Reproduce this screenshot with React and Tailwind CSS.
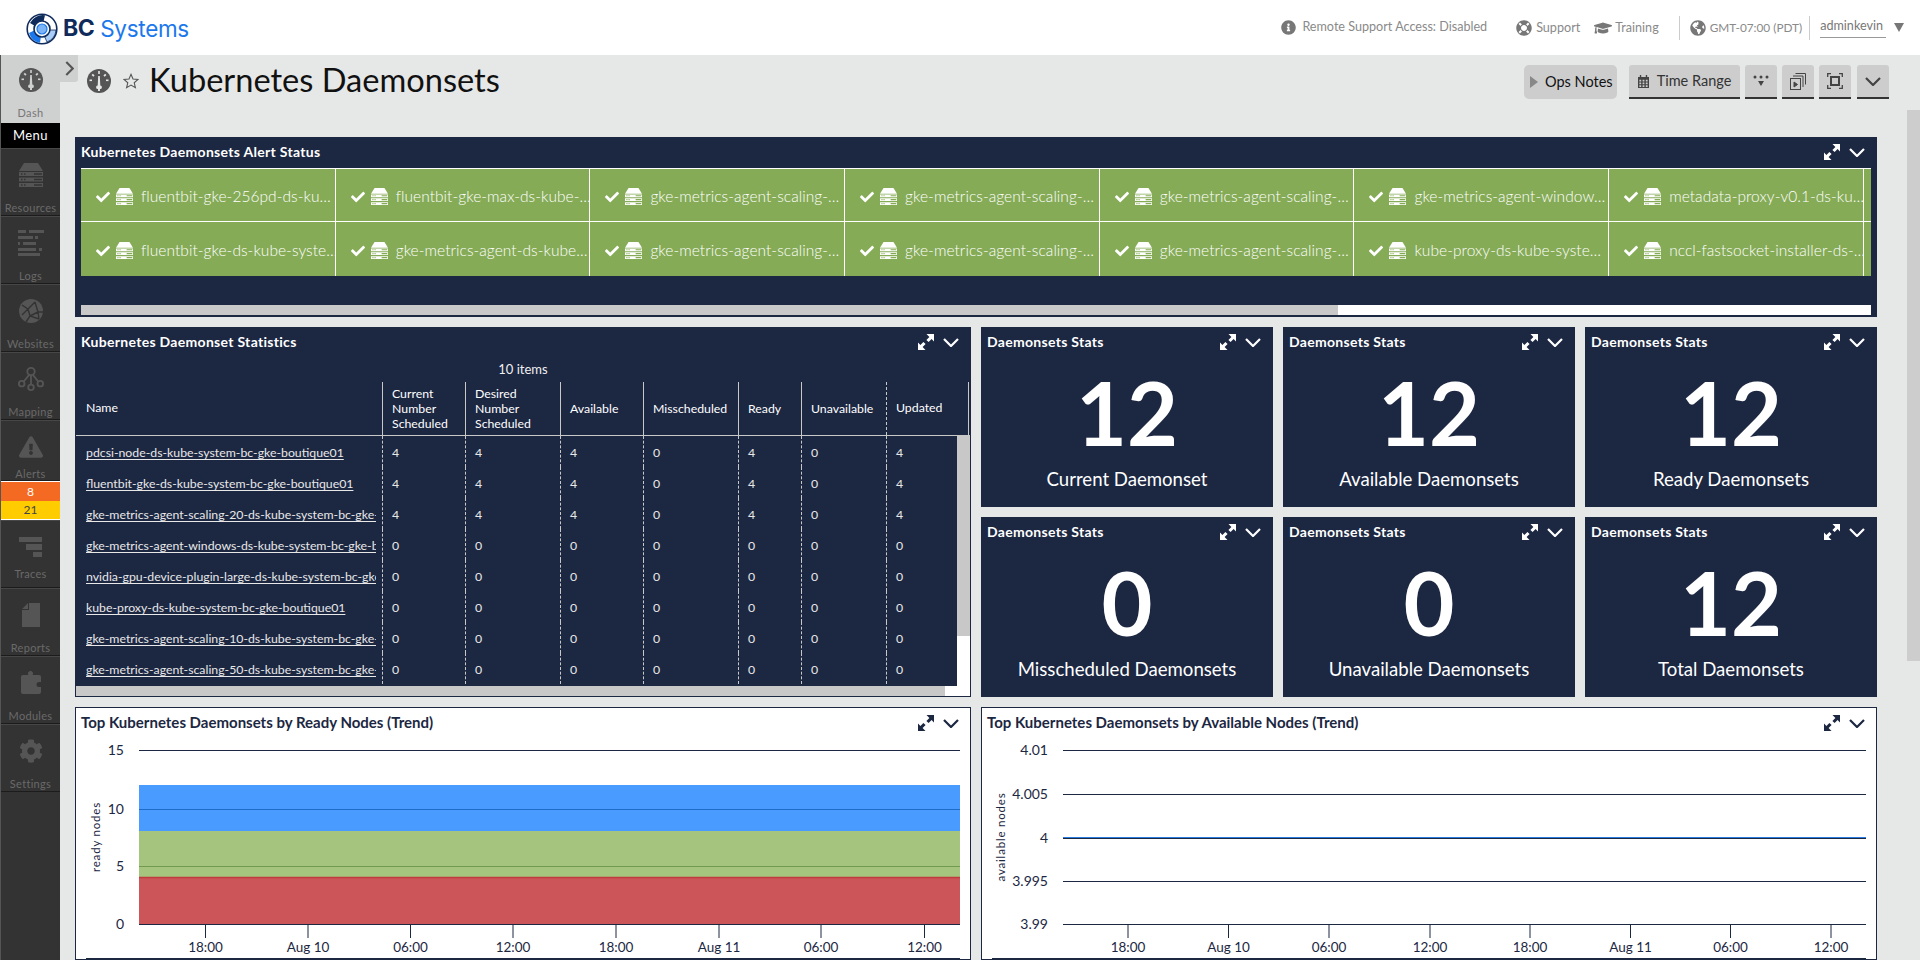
import React from "react";
import { FaCheck, FaCog, FaExclamationTriangle, FaGlobeAmericas, FaGraduationCap, FaInfoCircle, FaLifeRing } from "react-icons/fa";

const NAVY = "#1c2742";

function Gauge({ hole = "#cfd0d0", className = "w-6 h-6" }) {
  return (
    <svg viewBox="0 0 24 24" className={className}>
      <circle cx="12" cy="12" r="12" fill="#555555" />
      <g fill={hole}>
        <rect x="11.2" y="2" width="1.6" height="3" />
        <rect x="5" y="5" width="1.8" height="2.4" transform="rotate(-45 6 6)" />
        <rect x="17.2" y="5" width="1.8" height="2.4" transform="rotate(45 18 6)" />
        <rect x="2.5" y="10.5" width="2.5" height="1.6" />
        <rect x="19" y="10.5" width="2.5" height="1.6" />
        <path d="M11.2 7h1.6l.5 9.5a1.4 1.4 0 0 1-.3 3.5v2h-2v-2a1.4 1.4 0 0 1-.3-3.5z" />
      </g>
    </svg>
  );
}

function Server({ className = "w-6 h-6" }) {
  return (
    <svg viewBox="0 0 24 24" className={className} fill="currentColor" fillRule="evenodd">
      <path d="M5 0h14l5 8H0z" />
      <path d="M0 9h24v4H0zM2 10.2v1.6h1.5v-1.6zM5 10.2v1.6h1.5v-1.6zM15 10.2v1.6h8v-1.6z" />
      <path d="M0 14.5h24v4H0zM2 15.7v1.6h1.5v-1.6zM5 15.7v1.6h1.5v-1.6zM15 15.7v1.6h8v-1.6z" />
      <path d="M0 20h24v4H0zM2 21.2v1.6h1.5v-1.6zM5 21.2v1.6h1.5v-1.6zM15 21.2v1.6h8v-1.6z" />
    </svg>
  );
}

function Logs() {
  return (
    <svg viewBox="0 0 26 26" className="w-[26px] h-[26px]" fill="#555555">
      <path d="M0 0h8v3H0zM11 0h15v3H11zM0 6h15v3H0zM17 6h3v3h-3zM0 12h2v3H0zM5 12h13v3H5zM0 18h18v3H0zM21 18h3v3h-3zM0 23h22v3H0z" />
    </svg>
  );
}

function WebGlobe() {
  return (
    <svg viewBox="0 0 24 24" className="w-6 h-6">
      <circle cx="12" cy="12" r="12" fill="#555555" />
      <path d="M3 6l6 4 7-7M9 10l-6 6M9 10l2 7 9 3M11 17l-4 6M16 3l3 10 5 0M19 13l1 7M11 17l8-4" stroke="#333333" strokeWidth="1.4" fill="none" />
    </svg>
  );
}

function MapIcon() {
  return (
    <svg viewBox="0 0 28 26" className="w-[26px] h-[26px]" fill="none" stroke="#555555" strokeWidth="2">
      <circle cx="14" cy="5" r="4" />
      <circle cx="4" cy="18" r="3" />
      <circle cx="14" cy="22" r="3" />
      <circle cx="24" cy="18" r="3" />
      <path d="M14 9v10M12 8.500l-6 7.500M16 8.500l6 7.500" />
    </svg>
  );
}

function Traces() {
  return (
    <svg viewBox="0 0 23 20" className="w-[23px] h-5" fill="#555555">
      <path d="M0 0h23v5H0zM7 7h16v6H7zM14 15h9v5h-9z" />
    </svg>
  );
}

function Report() {
  return (
    <svg viewBox="0 0 18 24" className="w-[18px] h-6" fill="#555555">
      <path d="M0 6L6 0v6zM7 0h11v24H0V7h7z" />
    </svg>
  );
}

function Puzzle() {
  return (
    <svg viewBox="0 0 20 24" className="w-5 h-6" fill="#555555">
      <path d="M2 4h5.500a2.500 2.500 0 1 1 4 0H18a2 2 0 0 1 2 2v5h-2a2.500 2.500 0 0 0 0 5h2v5a2 2 0 0 1-2 2H2a2 2 0 0 1-2-2V6a2 2 0 0 1 2-2z" />
    </svg>
  );
}

function Logo() {
  return (
    <svg viewBox="0 0 32 32" className="w-8 h-8 mt-[2px]">
      <circle cx="16" cy="16" r="14.8" fill="#ffffff" stroke="#0f2b5b" strokeWidth="1.6" />
      <path d="M3 20A14 14 0 0 0 14 29.800L15 23A8 8 0 0 1 9 17z" fill="#1b78ec" />
      <path d="M4 10A14 14 0 0 1 19 2.300L17.500 8.500A8 8 0 0 0 9 13z" fill="#0f2b5b" />
      <path d="M30 17A14 14 0 0 1 21 29L18.500 23.500A8 8 0 0 0 23.500 17z" fill="#a8cdf7" stroke="#0f2b5b" strokeWidth="0.8" />
      <circle cx="16" cy="16" r="8" fill="#ffffff" stroke="#0f2b5b" strokeWidth="1.600" />
      <circle cx="16" cy="16" r="5" fill="#7db4f5" stroke="#1b78ec" strokeWidth="1.200" />
    </svg>
  );
}

function Expand({ color = "#ffffff" }) {
  return (
    <svg viewBox="0 0 16 16" className="w-[16px] h-[16px]" fill={color}>
      <path d="M8.500 0H16v7.500l-2.400-2.400-3 3-2.200-2.200 3-3zM7.500 16H0V8.500l2.400 2.400 3-3 2.200 2.200-3 3z" />
    </svg>
  );
}

function Chev({ color = "#ffffff", className = "w-4 h-[9px]", width = 2.2 }) {
  return (
    <svg viewBox="0 0 16 9" className={className} fill="none" stroke={color} strokeWidth={width}>
      <path d="M1 1l7 7 7-7" />
    </svg>
  );
}

function PanelHead({ title, dark }) {
  const c = dark ? NAVY : "#ffffff";
  return (
    <div className="flex items-center h-[30px] pl-[6px] pr-[12px] shrink-0">
      <span className={`flex-1 -mt-[2px] font-bold whitespace-nowrap ${dark ? "text-[15px] text-[#1c2742]" : "text-[14px] tracking-[0.3px] text-white"}`}>{title}</span>
      <span className="mr-[9px] flex"><Expand color={c} /></span>
      <Chev color={c} />
    </div>
  );
}

function SideItem({ icon, label, tight, h = "h-[68px]" }) {
  return (
    <div className={`${h} border-t border-t-[#474747] border-b border-b-[#1c1c1c] flex flex-col items-center shrink-0 pt-[14px]`}>
      <div className="h-6 w-full flex items-center justify-center text-[#555555]">{icon}</div>
      <div className={`${tight ? "mt-[8px]" : "mt-[14px]"} text-[11px] leading-[14px] text-[#6a6a6a] tracking-[0.3px]`}>{label}</div>
    </div>
  );
}

function Sidebar() {
  return (
    <aside className="w-[60px] shrink-0 bg-[#333333] flex flex-col border-l border-l-[#555555]">
      <div className="h-[68px] bg-[#cfd0d0] flex flex-col items-center pt-[13px] shrink-0">
        <Gauge />
        <div className="mt-[14px] text-[11px] leading-[14px] text-[#777777] tracking-[0.3px]">Dash</div>
      </div>
      <div className="h-[25px] bg-black text-white text-[13px] leading-[24px] text-center shrink-0 tracking-[0.4px]">Menu</div>
      <SideItem icon={<Server />} label="Resources" />
      <SideItem icon={<Logs />} label="Logs" />
      <SideItem icon={<WebGlobe />} label="Websites" />
      <SideItem icon={<MapIcon />} label="Mapping" />
      <SideItem icon={<FaExclamationTriangle className="w-6 h-6" />} label="Alerts" tight h="h-[61px]" />
      <div className="border-t border-b border-white shrink-0">
        <div className="h-[19px] bg-[#f56a22] text-white text-[12px] leading-[19px] text-center">8</div>
        <div className="h-[18px] bg-[#ffcc00] text-[#444444] text-[12px] leading-[18px] text-center">21</div>
      </div>
      <SideItem icon={<Traces />} label="Traces" tight />
      <SideItem icon={<Report />} label="Reports" />
      <SideItem icon={<Puzzle />} label="Modules" />
      <SideItem icon={<FaCog className="w-6 h-6" />} label="Settings" />
    </aside>
  );
}

function Header() {
  return (
    <header className="h-[55px] bg-white flex items-center shrink-0 pl-[26px] pr-[16px]">
      <Logo />
      <span className="ml-[5px] mt-[2px] [font-family:Inter,sans-serif] text-[23px] font-bold text-[#0f2b5b] tracking-[-0.5px]">BC</span>
      <span className="ml-[6px] mt-[2px] [font-family:Inter,sans-serif] text-[22.500px] text-[#1b78ec] tracking-[-0.3px]">Systems</span>
      <div className="flex-1" />
      <div className="flex items-center text-[12.600px] text-[#8a8a8a]">
        <FaInfoCircle className="w-[15px] h-[15px] text-[#777777] mr-[6px]" />
        <span className="mr-[29px]">Remote Support Access: Disabled</span>
        <FaLifeRing className="w-4 h-4 text-[#777777] mr-[4px]" />
        <span className="mr-[14px] mt-[2px]">Support</span>
        <FaGraduationCap className="w-[18px] h-[18px] text-[#777777] mr-[3px]" />
        <span className="mt-[2px]">Training</span>
        <span className="w-px h-[24px] bg-[#cccccc] ml-[20px] mr-[10px]" />
        <FaGlobeAmericas className="w-4 h-4 text-[#777777] mr-[4px]" />
        <span className="mt-[1px] text-[11.800px]">GMT-07:00 (PDT)</span>
        <span className="w-px h-[24px] bg-[#cccccc] ml-[7px] mr-[10px]" />
        <span className="border-b border-[#999999] text-[#777777] pr-[3px] pb-[2px]">adminkevin</span>
        <span className="ml-[8px] w-0 h-0 border-l-[5px] border-r-[5px] border-t-[9px] border-l-transparent border-r-transparent border-t-[#777777]" />
      </div>
    </header>
  );
}

function ToolBtn({ children, className = "w-[32px]" }) {
  return (
    <div className={`${className} h-[34px] bg-[#cdcdcd] rounded-t-[3px] border-b-2 border-b-[#333333] flex items-center justify-center text-[#444444]`}>{children}</div>
  );
}

function Toolbar() {
  return (
    <div className="h-[82px] flex items-start pl-[27px] pr-[31px] shrink-0">
      <div className="flex items-center h-[52px]">
        <Gauge hole="#e6e7e7" />
        <svg viewBox="0 0 24 24" className="w-4 h-4 ml-[12px]" fill="none" stroke="#555555" strokeWidth="1.600">
          <path d="M12 2l3 7 7.500.6-5.700 5 1.800 7.400L12 18l-6.600 4 1.800-7.400-5.700-5L9 9z" />
        </svg>
        <h1 className="ml-[10px] -mt-[2px] text-[32.600px] leading-none text-[#111111] font-normal whitespace-nowrap">Kubernetes Daemonsets</h1>
      </div>
      <div className="flex-1" />
      <div className="flex items-start pt-[10px]">
        <div className="w-[93px] h-[34px] bg-[#cdcdcd] rounded-[5px] flex items-center pl-[6px] text-[14.500px] text-[#111111] mr-[12px]">
          <span className="w-0 h-0 border-t-[6px] border-b-[6px] border-l-[8px] border-t-transparent border-b-transparent border-l-[#888888] mr-[7px]" />
          Ops Notes
        </div>
        <ToolBtn className="w-[111px] mr-[5px]">
          <svg viewBox="0 0 12 14" className="w-[11px] h-[13px] mr-[8px]" fill="#444444">
            <path d="M2 0h1.500v2H8.500V0H10v2h2v12H0V2h2zM1.500 5v2h2V5zM5 5v2h2V5zM8.500 5v2h2V5zM1.500 8v2h2V8zM5 8v2h2V8zM8.500 8v2h2V8zM1.500 11v2h2v-2zM5 11v2h2v-2zM8.500 11v2h2v-2z" fillRule="evenodd" />
          </svg>
          <span className="text-[14.500px] text-[#333333]">Time Range</span>
        </ToolBtn>
        <ToolBtn className="w-[32px] mr-[5px]">
          <svg viewBox="0 0 16 12" className="w-[16px] h-[12px]" fill="#444444">
            <circle cx="2" cy="2" r="1.500" /><circle cx="8" cy="2" r="1.500" /><circle cx="14" cy="2" r="1.500" />
            <path d="M5 6h6l-3 5z" />
          </svg>
        </ToolBtn>
        <ToolBtn className="w-[32px] mr-[5px]">
          <svg viewBox="0 0 16 17" className="w-[16px] h-[17px]" fill="none" stroke="#444444" strokeWidth="1">
            <path d="M5.500.5h10v11M3 3h10v11" />
            <rect x="0.500" y="5.500" width="10" height="11" fill="#cdcdcd" />
            <path d="M4 9l3.500 2.500L4 14z" fill="#444444" />
          </svg>
        </ToolBtn>
        <ToolBtn className="w-[32px] mr-[6px]">
          <svg viewBox="0 0 16 16" className="w-[16px] h-[16px]" fill="none" stroke="#444444" strokeWidth="1.300">
            <path d="M.7 4V.7H4M12 .7h3.300V4M15.300 12v3.300H12M4 15.300H.7V12" />
            <rect x="4" y="4" width="8" height="8" strokeWidth="2" />
          </svg>
        </ToolBtn>
        <ToolBtn className="w-[32px]"><Chev color="#444444" className="w-[16px] h-[9px]" /></ToolBtn>
      </div>
    </div>
  );
}

const row1 = ["fluentbit-gke-256pd-ds-ku…", "fluentbit-gke-max-ds-kube-…", "gke-metrics-agent-scaling-…", "gke-metrics-agent-scaling-…", "gke-metrics-agent-scaling-…", "gke-metrics-agent-window…", "metadata-proxy-v0.1-ds-ku…", ""];
const row2 = ["fluentbit-gke-ds-kube-syste…", "gke-metrics-agent-ds-kube…", "gke-metrics-agent-scaling-…", "gke-metrics-agent-scaling-…", "gke-metrics-agent-scaling-…", "kube-proxy-ds-kube-syste…", "nccl-fastsocket-installer-ds-…", ""];

function AlertRow({ items, rowClass }) {
  return (
    <div className={`flex h-[54px] ${rowClass}`}>
      {items.map((t, i) => (
        <div key={i} className="w-[254.700px] shrink-0 h-full bg-[#85ab56] border-r border-white flex items-center pl-[14px] pt-[3px] text-white">
          {t && (
            <>
              <FaCheck className="w-4 h-[14px] shrink-0" />
              <span className="ml-[5px] flex"><Server className="w-[17px] h-[17px]" /></span>
              <span className="ml-[8px] text-[15.500px] font-light tracking-[0.05px] whitespace-nowrap">{t}</span>
            </>
          )}
        </div>
      ))}
    </div>
  );
}

function AlertPanel() {
  return (
    <section className="h-[180px] bg-[#1c2742] flex flex-col shrink-0">
      <PanelHead title="Kubernetes Daemonsets Alert Status" />
      <div className="mx-[6px] mt-[1px] overflow-hidden">
        <AlertRow items={row1} rowClass="border-t border-b border-white" />
        <AlertRow items={row2} rowClass="" />
      </div>
      <div className="mx-[6px] mt-[29px] h-[10px] bg-white">
        <div className="w-[1257px] h-full bg-[#c8c8c8]" />
      </div>
    </section>
  );
}

const headers = [
  ["Current", "Number", "Scheduled"],
  ["Desired", "Number", "Scheduled"],
  ["Available"],
  ["Misscheduled"],
  ["Ready"],
  ["Unavailable"],
];

const rows = [
  ["pdcsi-node-ds-kube-system-bc-gke-boutique01", 4],
  ["fluentbit-gke-ds-kube-system-bc-gke-boutique01", 4],
  ["gke-metrics-agent-scaling-20-ds-kube-system-bc-gke-boutique01", 4],
  ["gke-metrics-agent-windows-ds-kube-system-bc-gke-boutique01", 0],
  ["nvidia-gpu-device-plugin-large-ds-kube-system-bc-gke-boutique01", 0],
  ["kube-proxy-ds-kube-system-bc-gke-boutique01", 0],
  ["gke-metrics-agent-scaling-10-ds-kube-system-bc-gke-boutique01", 0],
  ["gke-metrics-agent-scaling-50-ds-kube-system-bc-gke-boutique01", 0],
];

function StatsTable() {
  return (
    <section className="h-[370px] border border-[#1c2742] bg-white flex flex-col text-[12.300px] text-[#e8e8e8]">
      <div className="bg-[#1c2742] h-[28px]">
        <div className="-ml-px -mr-px -mt-px"><PanelHead title="Kubernetes Daemonset Statistics" /></div>
      </div>
      <div className="bg-[#1c2742] h-[26px] leading-[26px] text-center text-[13px] text-[#f0f0f0]">10 items</div>
      <div className="bg-[#1c2742] h-[54px] border-b border-[#c8c8c8] grid grid-cols-[306px_83px_95px_83px_95px_63px_85px_83px]">
        <div className="pl-[10px] flex items-center text-white">Name</div>
        {headers.map((h, i) => (
          <div key={i} className="pl-[9px] flex flex-col justify-center leading-[15px] text-white border-l border-[#c8c8c8]">
            {h.map((l) => <span key={l}>{l}</span>)}
          </div>
        ))}
        <div className="border-r border-[#c8c8c8]">
          <div className="h-full pl-[9px] flex items-center text-white border-l border-dashed border-[#c8c8c8]">Updated</div>
        </div>
      </div>
      <div className="flex h-[250px]">
        <div className="w-[881px] bg-[#1c2742] overflow-hidden">
          {rows.map(([name, v]) => (
            <div key={name} className="h-[31px] grid grid-cols-[306px_83px_95px_83px_95px_63px_85px_71px] items-stretch">
              <div className="pl-[10px] pr-[6px] pt-[2px] leading-[29px]">
                <div className="overflow-hidden whitespace-nowrap"><span className="underline underline-offset-2">{name}</span></div>
              </div>
              {[v, v, v, 0, v, 0, v].map((c, j) => (
                <div key={j} className="pl-[9px] pt-[2px] leading-[29px] border-l border-dashed border-[#c8c8c8]">{c}</div>
              ))}
            </div>
          ))}
        </div>
        <div className="w-[13px] bg-white">
          <div className="h-[200px] bg-[#c8c8c8]" />
        </div>
      </div>
      <div className="h-[10px] bg-white">
        <div className="w-[869px] h-full bg-[#c8c8c8]" />
      </div>
    </section>
  );
}

function StatCard({ value, label }) {
  return (
    <section className="h-[180px] bg-[#1c2742] text-white flex flex-col">
      <PanelHead title="Daemonsets Stats" />
      <div className="mt-[11px] h-[88px] text-[88px] leading-[88px] font-bold text-center">{value}</div>
      <div className="mt-[11px] h-6 text-[18.600px] leading-6 text-center">{label}</div>
    </section>
  );
}

const t18 = ["18:00", "Aug 10", "06:00", "12:00", "18:00", "Aug 11", "06:00", "12:00"];

function AreaChart() {
  const xs = [205.5, 308, 410.5, 513, 616, 719, 821, 924.5];
  const o = 76;
  const top = 738;
  const ys = [[750, "15"], [809, "10"], [866, "5"], [924, "0"]];
  return (
    <svg viewBox="0 0 894 222" className="w-[894px] h-[222px] block shrink-0">
      <rect x={139 - o} y={785 - top} width={821} height={46} fill="#4a9bff" />
      <rect x={139 - o} y={831 - top} width={821} height={46} fill="#a5c47e" />
      <rect x={139 - o} y={877 - top} width={821} height={47} fill="#cb5559" />
      <line x1={139 - o} x2={960 - o} y1={750.5 - top} y2={750.5 - top} stroke={NAVY} />
      <line x1={139 - o} x2={960 - o} y1={809.5 - top} y2={809.5 - top} stroke="#1f6bc9" />
      <line x1={139 - o} x2={960 - o} y1={866.5 - top} y2={866.5 - top} stroke="#6f9a50" />
      <line x1={139 - o} x2={960 - o} y1={877.5 - top} y2={877.5 - top} stroke="#c03a3e" strokeWidth="1.500" />
      <line x1={139 - o} x2={960 - o} y1={924.5 - top} y2={924.5 - top} stroke={NAVY} />
      {ys.map(([y, l]) => (
        <text key={l} x={124 - o} y={y + 5 - top} textAnchor="end" fontSize="14" fill={NAVY}>{l}</text>
      ))}
      <text transform={`translate(${100 - o} ${837 - top}) rotate(-90)`} textAnchor="middle" fontSize="11.500" letterSpacing="0.8" fill={NAVY}>ready nodes</text>
      {xs.map((x, i) => (
        <g key={i}>
          <line x1={x - o} x2={x - o} y1={924 - top} y2={938 - top} stroke={NAVY} />
          <text x={x - o} y={952 - top} textAnchor="middle" fontSize="13.500" fill={NAVY}>{t18[i]}</text>
        </g>
      ))}
      <line x1={86 - o} x2={960 - o} y1={958.5 - top} y2={958.5 - top} stroke={NAVY} />
    </svg>
  );
}

function LineChart() {
  const xs = [1128, 1228.5, 1329, 1430, 1530, 1630.5, 1730.5, 1831];
  const o = 982;
  const top = 738;
  const ys = [[750, "4.01"], [794, "4.005"], [838, "4"], [881, "3.995"], [924, "3.99"]];
  return (
    <svg viewBox="0 0 894 222" className="w-[894px] h-[222px] block shrink-0">
      {ys.map(([y, l]) => (
        <g key={l}>
          <line x1={1063 - o} x2={1866 - o} y1={y + 0.5 - top} y2={y + 0.5 - top} stroke={NAVY} />
          <text x={1048 - o} y={y + 5 - top} textAnchor="end" fontSize="14" fill={NAVY}>{l}</text>
        </g>
      ))}
      <line x1={1063 - o} x2={1866 - o} y1={837.5 - top} y2={837.5 - top} stroke="#2a7de0" />
      <text transform={`translate(${1005 - o} ${837 - top}) rotate(-90)`} textAnchor="middle" fontSize="11.500" letterSpacing="0.8" fill={NAVY}>available nodes</text>
      {xs.map((x, i) => (
        <g key={i}>
          <line x1={x - o} x2={x - o} y1={924 - top} y2={938 - top} stroke={NAVY} />
          <text x={x - o} y={952 - top} textAnchor="middle" fontSize="13.500" fill={NAVY}>{t18[i]}</text>
        </g>
      ))}
      <line x1={992 - o} x2={1866 - o} y1={958.5 - top} y2={958.5 - top} stroke={NAVY} />
    </svg>
  );
}

function ChartPanel({ title, children }) {
  return (
    <section className="h-[253px] border border-[#1c2742] bg-white flex flex-col overflow-hidden">
      <div className="-mx-px"><PanelHead title={title} dark /></div>
      {children}
    </section>
  );
}

export default function App() {
  return (
    <div className="w-[1920px] h-[960px] overflow-hidden flex flex-col bg-[#e6e7e7] [font-family:Lato,sans-serif]">
      <Header />
      <div className="flex flex-1 min-h-0">
        <Sidebar />
        <main className="flex-1 min-w-0 relative flex flex-col">
          <div className="absolute left-0 top-0 w-[18px] h-[27px] bg-[#cfd0d0] rounded-br-[3px] flex items-center justify-center">
            <svg viewBox="0 0 8 14" className="w-[9px] h-[15px]" fill="none" stroke="#555555" strokeWidth="2"><path d="M1 1l6 6-6 6" /></svg>
          </div>
          <div className="absolute right-0 top-[55px] w-[13px] h-[551px] bg-[#cdcdcd]" />
          <Toolbar />
          <div className="pl-[15px] pr-[43px] flex flex-col gap-[10px]">
            <AlertPanel />
            <div className="grid grid-cols-2 gap-[10px]">
              <StatsTable />
              <div className="grid grid-cols-3 gap-[10px] content-start">
                <StatCard value="12" label="Current Daemonset" />
                <StatCard value="12" label="Available Daemonsets" />
                <StatCard value="12" label="Ready Daemonsets" />
                <StatCard value="0" label="Misscheduled Daemonsets" />
                <StatCard value="0" label="Unavailable Daemonsets" />
                <StatCard value="12" label="Total Daemonsets" />
              </div>
            </div>
            <div className="grid grid-cols-2 gap-[10px]">
              <ChartPanel title="Top Kubernetes Daemonsets by Ready Nodes (Trend)"><AreaChart /></ChartPanel>
              <ChartPanel title="Top Kubernetes Daemonsets by Available Nodes (Trend)"><LineChart /></ChartPanel>
            </div>
          </div>
        </main>
      </div>
    </div>
  );
}
